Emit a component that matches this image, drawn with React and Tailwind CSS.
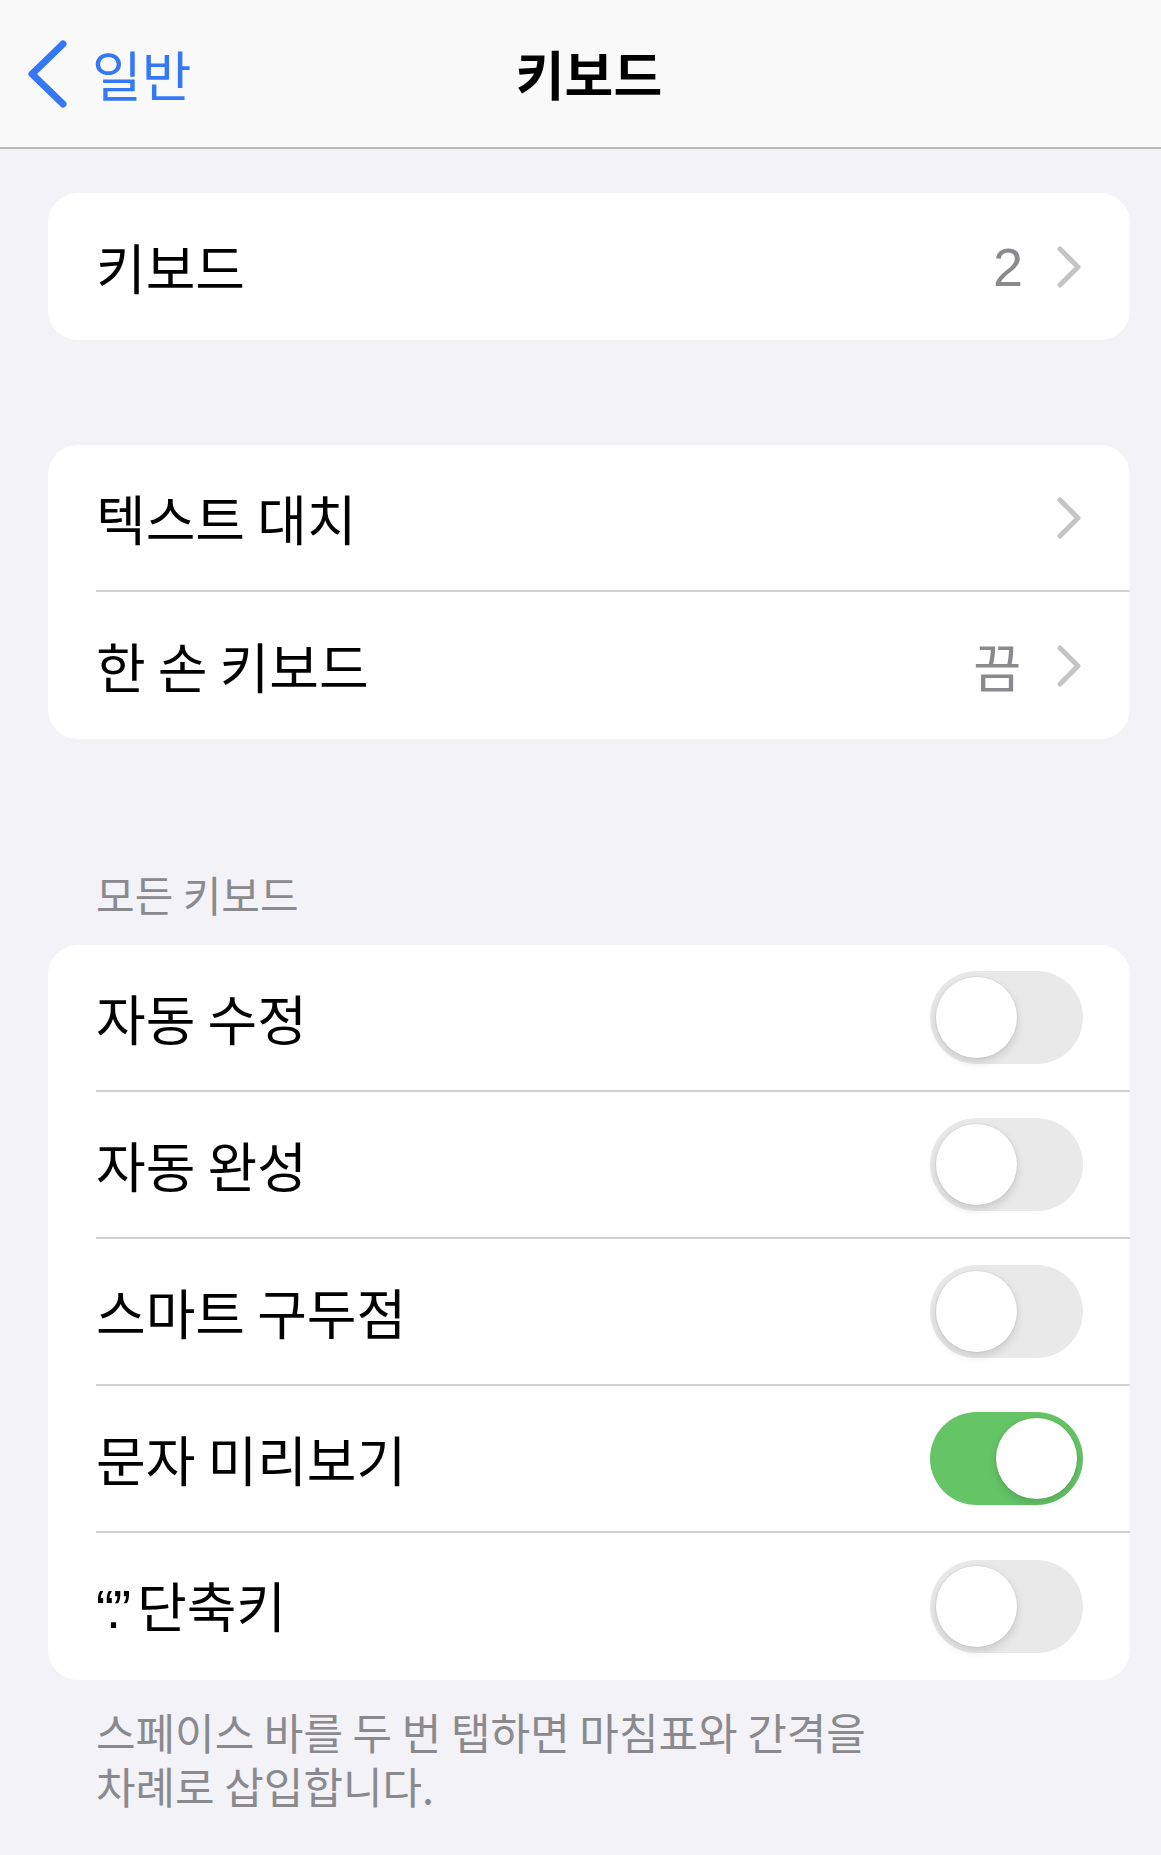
import React, { useState } from 'react';

const FONT = { fontFamily: '"Noto Sans CJK KR", "Noto Sans", sans-serif' };

const Chevron = () => (
  <svg width="28" height="44" viewBox="0 0 28 44" className="shrink-0">
    <polyline points="5,4 23,22 5,40" fill="none" stroke="#c4c4c7" strokeWidth="5" strokeLinecap="round" strokeLinejoin="round" />
  </svg>
);

const Toggle = ({ on, onClick }) => (
  <button
    onClick={onClick}
    className={`w-[153px] h-[93px] rounded-full p-[6px] flex shrink-0 transition-colors ${on ? 'bg-[#65c466] justify-end' : 'bg-[#e9e9ea] justify-start'}`}
  >
    <span className="w-[81px] h-[81px] rounded-full bg-white shadow-[0_4px_10px_rgba(0,0,0,0.14),0_0_0_1px_rgba(0,0,0,0.04)]"></span>
  </button>
);

// 한 줄 (마지막 줄은 구분선 없음)
const Row = ({ last, children }) => (
  <div className="h-[147px] pl-[48px] flex">
    <div className={`flex-1 h-full flex items-center justify-between pr-[47px] ${last ? '' : 'border-b-2 border-[#d1d1d6]'}`}>
      {children}
    </div>
  </div>
);

const Label = ({ children }) => (
  <span className="text-[54px] leading-none text-black">{children}</span>
);

export default function App() {
  const [toggles, setToggles] = useState({
    autoCorrect: false,
    autoComplete: false,
    smartPunct: false,
    charPreview: true,
    periodShortcut: false,
  });

  const flip = (key) => setToggles((t) => ({ ...t, [key]: !t[key] }));

  const toggleRows = [
    { key: 'autoCorrect', label: '자동 수정' },
    { key: 'autoComplete', label: '자동 완성' },
    { key: 'smartPunct', label: '스마트 구두점' },
    { key: 'charPreview', label: '문자 미리보기' },
    {
      key: 'periodShortcut',
      label: (
        <>
          <span className="tracking-[-8px]" style={{ fontFamily: '"Liberation Sans", sans-serif' }}>“.”</span>
          <span className="ml-[14px]">단축키</span>
        </>
      ),
    },
  ];

  return (
    <div className="w-[1161px] min-h-[1855px] overflow-hidden bg-[#f2f2f7]" style={FONT}>
      <div className="w-[1178px]">
        {/* 상단 내비게이션 */}
        <header className="h-[149px] bg-[#f9f9fa] border-b-2 border-[#b8b8bc] grid grid-cols-[1fr_auto_1fr] items-center">
          <button className="flex items-center pl-[24px] gap-[22px] text-[#3478f6]">
            <svg width="46" height="70" viewBox="0 0 46 70">
              <polyline points="39,5 8,35 39,65" fill="none" stroke="#3478f6" strokeWidth="7" strokeLinecap="round" strokeLinejoin="round" />
            </svg>
            <span className="text-[54px] leading-none">일반</span>
          </button>
          <h1 className="text-[53px] leading-none font-semibold text-black">키보드</h1>
          <div></div>
        </header>

        <main className="px-[48px] pt-[44px] pb-[60px]">
          <section className="bg-white rounded-[30px] overflow-hidden">
            <Row last>
              <Label>키보드</Label>
              <div className="flex items-center gap-[32px]">
                <span className="text-[54px] leading-none text-[#8a8a8e]" style={{ fontFamily: '"Liberation Sans", sans-serif' }}>2</span>
                <Chevron />
              </div>
            </Row>
          </section>

          <section className="mt-[105px] bg-white rounded-[30px] overflow-hidden">
            <Row>
              <Label>텍스트 대치</Label>
              <Chevron />
            </Row>
            <Row last>
              <Label>한 손 키보드</Label>
              <div className="flex items-center gap-[34px]">
                <span className="text-[52px] leading-none text-[#8a8a8e]">끔</span>
                <Chevron />
              </div>
            </Row>
          </section>

          <h2 className="mt-[131px] mb-[27px] pl-[48px] h-[48px] text-[42px] leading-[48px] font-normal text-[#8a8a8e]">
            모든 키보드
          </h2>

          <section className="bg-white rounded-[30px] overflow-hidden">
            {toggleRows.map((r, i) => (
              <Row key={r.key} last={i === toggleRows.length - 1}>
                <Label>{r.label}</Label>
                <Toggle on={toggles[r.key]} onClick={() => flip(r.key)} />
              </Row>
            ))}
          </section>

          <p className="pt-[24px] pl-[48px] text-[43px] leading-[54px] text-[#8a8a8e]">
            스페이스 바를 두 번 탭하면 마침표와 간격을
            <br />
            차례로 삽입합니다.
          </p>
        </main>
      </div>
    </div>
  );
}
